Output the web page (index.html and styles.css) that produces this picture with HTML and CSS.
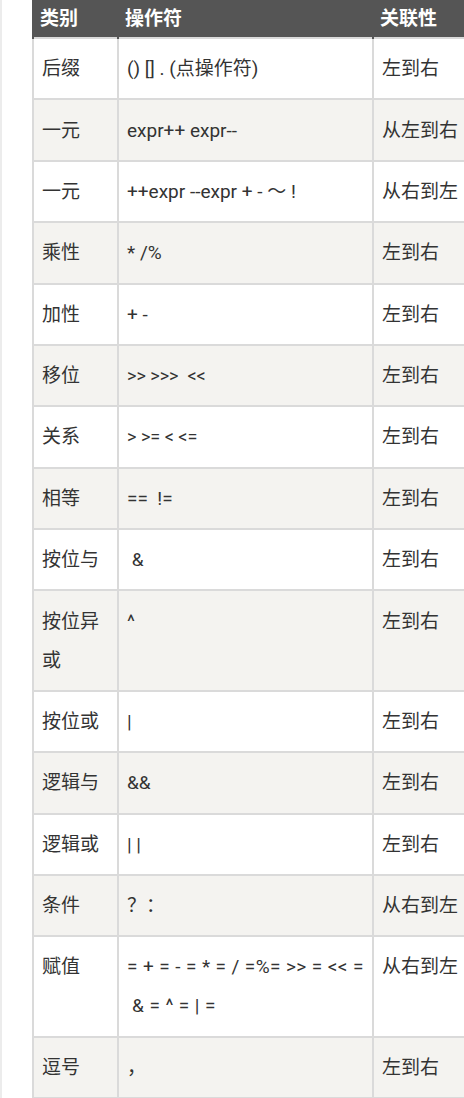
FILE: index.html
```html
<!DOCTYPE html>
<html lang="zh">
<head>
<meta charset="utf-8">
<link rel="stylesheet" href="styles.css">
</head>
<body>
<div class="page">
<table class="ops">
<thead>
<tr><th class="c1">类别</th><th class="c2">操作符</th><th class="c3">关联性</th></tr>
</thead>
<tbody>
<tr><td>后缀</td><td>() [] . (点操作符)</td><td>左到右</td></tr>
<tr><td>一元</td><td>expr++ expr--</td><td>从左到右</td></tr>
<tr><td>一元</td><td>++expr --expr + - ～ !</td><td>从右到左</td></tr>
<tr><td>乘性</td><td>* /%</td><td>左到右</td></tr>
<tr><td>加性</td><td>+ -</td><td>左到右</td></tr>
<tr><td>移位</td><td class="sm">&gt;&gt; &gt;&gt;&gt;&nbsp; &lt;&lt;</td><td>左到右</td></tr>
<tr><td>关系</td><td class="sm">&gt; &gt;= &lt; &lt;=</td><td>左到右</td></tr>
<tr><td>相等</td><td>==&nbsp; !=</td><td>左到右</td></tr>
<tr><td>按位与</td><td>&nbsp;&amp;</td><td>左到右</td></tr>
<tr><td>按位异或</td><td>^</td><td>左到右</td></tr>
<tr><td>按位或</td><td>|</td><td>左到右</td></tr>
<tr><td>逻辑与</td><td>&amp;&amp;</td><td>左到右</td></tr>
<tr><td>逻辑或</td><td>| |</td><td>左到右</td></tr>
<tr><td>条件</td><td>？：</td><td>从右到左</td></tr>
<tr><td>赋值</td><td class="wide">= + = - = * = / =%= &gt;&gt; = &lt;&lt; =<br>&nbsp;&amp; = ^ = | =</td><td>从右到左</td></tr>
<tr><td>逗号</td><td>，</td><td>左到右</td></tr>
</tbody>
</table>
</div>
</body>
</html>
```
FILE: styles.css
```css
html, body {
  margin: 0;
  padding: 0;
  background: #ffffff;
  overflow: hidden;
}
body {
  font-family: Roboto, "Noto Sans CJK SC", sans-serif;
  color: #333333;
  width: 464px;
}
.page {
  border-left: 2px solid #ececec;
  padding-left: 30px;
  min-height: 1098px;
  box-sizing: border-box;
}
.ops {
  border-collapse: collapse;
  table-layout: fixed;
  width: 440px;
  font-size: 19px;
}
.ops th {
  background: #555555;
  color: #ffffff;
  font-weight: bold;
  text-align: left;
  height: 37px;
  line-height: 37px;
  padding: 0 6px;
  border-left: 2px solid #555555;
  border-right: 2px solid #555555;
}
.ops .c1 { width: 71px; }
.ops .c2 { width: 241px; }
.ops .c3 { width: 100px; }
.ops td {
  border: 2px solid #dadada;
  padding: 10.2px 8px 10.2px 8px;
  line-height: 39px;
  vertical-align: top;
  text-align: left;
}
.ops tbody tr:nth-child(even) td {
  background: #f4f3f0;
}
.ops td.sm {
  font-size: 18px;
}
.ops td.wide {
  letter-spacing: 0.4px;
}
```
